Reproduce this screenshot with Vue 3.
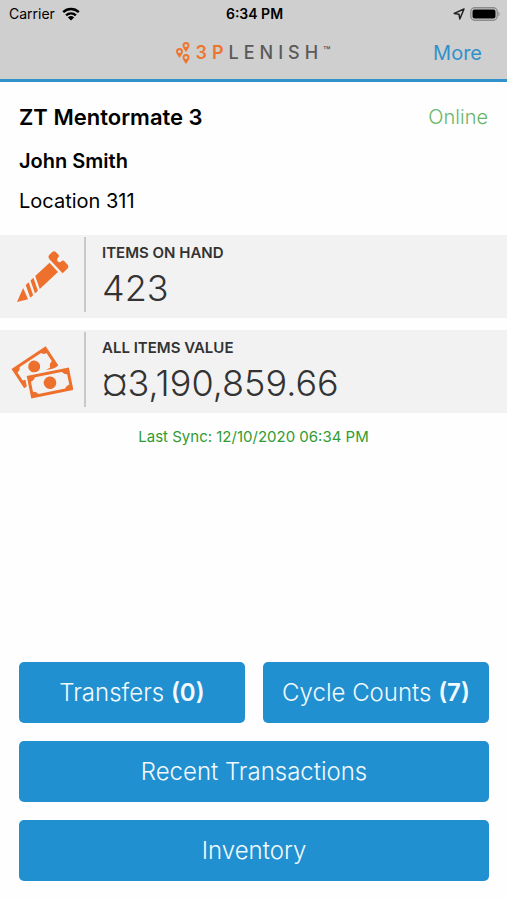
<script setup>
const stats = [
  { id: 'items', label: 'ITEMS ON HAND', value: '423' },
  { id: 'value', label: 'ALL ITEMS VALUE', value: '¤3,190,859.66' },
]

const actions = [
  { label: 'Transfers', count: 0 },
  { label: 'Cycle Counts', count: 7 },
  { label: 'Recent Transactions', wide: true },
  { label: 'Inventory', wide: true },
]

const pins = ['translate(6.500 0)', 'translate(0 6)', 'translate(6.500 12)']
</script>

<template>
  <div class="screen">
    <header class="top">
      <div class="status">
        <div class="carrier">
          <span>Carrier</span>
          <svg class="wifi" viewBox="0 0 18 14" aria-hidden="true">
            <path d="M1.200 5.100a11.300 11.300 0 0 1 15.600 0" />
            <path d="M4.100 8.300a7.100 7.100 0 0 1 9.800 0" />
            <path class="solid" d="M9 13.600 5.900 10.500a4.600 4.600 0 0 1 6.200 0z" />
          </svg>
        </div>
        <span class="time">6:34 PM</span>
        <div class="power">
          <svg class="locate" viewBox="0 0 12 12" aria-hidden="true">
            <path d="M11 1 1.200 5.400 6 6.200 6.800 11z" />
          </svg>
          <svg class="battery" viewBox="0 0 30 14" aria-hidden="true">
            <rect class="shell" x=".8" y=".8" width="26.400" height="12.400" rx="4" />
            <rect x="2.500" y="2.500" width="23" height="9" rx="2" />
            <path class="tip" d="M28.400 4.600c1.600.8 1.600 4 0 4.800z" />
          </svg>
        </div>
      </div>
      <div class="nav">
        <h1 class="brand">
          <svg class="pins" viewBox="0 0 14 22" aria-hidden="true">
            <path
              v-for="pin in pins"
              :key="pin"
              :transform="pin"
              d="M3.500 0A3.500 3.500 0 0 1 7 3.500C7 5.800 4.800 7.200 4 9.600H3C2.200 7.200 0 5.800 0 3.500A3.500 3.500 0 0 1 3.500 0zM3.500 1.900a1.600 1.600 0 1 0 0 3.200 1.600 1.600 0 0 0 0-3.200z"
            />
          </svg>
          <span class="wordmark"><span class="accent">3P</span>LENISH</span><span class="tm">™</span>
        </h1>
        <a class="more" href="#more">More</a>
      </div>
    </header>

    <main class="body">
      <section class="profile">
        <div class="profile-head">
          <h2 class="account">ZT Mentormate 3</h2>
          <span class="online">Online</span>
        </div>
        <p class="person">John Smith</p>
        <p class="place">Location 311</p>
      </section>

      <section class="stats">
        <article v-for="stat in stats" :key="stat.id" class="stat">
          <div class="stat-icon">
            <svg v-if="stat.id === 'items'" viewBox="0 0 64 64" aria-hidden="true">
              <g transform="translate(8 59) rotate(-43)">
                <path d="M0 0 14-6 10 5.500z" />
                <path d="M12.500 6 18-6.500H22L16.500 6z" />
                <path d="M19 6 24.500-6.500H28.500L23 6z" />
                <path d="M25.500 6 31-6.500H50.500V6z" />
                <path d="M53-8.500q0-4 3-4h3.500q3 0 3 3v3q0 2-2 2-3 .5-3 2.500T59.500.500q3 0 3 2v4q0 3.500-3 3.500h-6.500z" />
              </g>
            </svg>
            <svg v-else viewBox="0 0 64 64" aria-hidden="true">
              <g transform="translate(2.500 31) rotate(-33.500)">
                <rect class="note" x="1.500" y="1.500" width="38" height="20" />
                <circle cx="20.300" cy="10.500" r="6" />
                <path d="M1 1h7q0 5-7 5.500zM40 1h-7q0 5 7 5.500zM1 21h7q0-5-7-5.500zM40 21h-7q0-5 7-5.500z" />
              </g>
              <g transform="translate(17.700 38) rotate(-11.500)">
                <rect class="gap" x="-2" y="-2" width="46" height="27" />
                <rect class="note" x="1.500" y="1.500" width="40" height="20" />
                <circle cx="21.500" cy="11.300" r="6.300" />
                <path d="M1 1h7q0 5-7 5.500zM42 1h-7q0 5 7 5.500zM1 22h7q0-5-7-5.500zM42 22h-7q0-5 7-5.500z" />
              </g>
            </svg>
          </div>
          <div class="stat-text">
            <h3 class="stat-label">{{ stat.label }}</h3>
            <p class="stat-value">{{ stat.value }}</p>
          </div>
        </article>
      </section>

      <p class="sync">Last Sync: 12/10/2020 06:34 PM</p>

      <nav class="actions">
        <button
          v-for="action in actions"
          :key="action.label"
          type="button"
          class="action"
          :class="{ wide: action.wide }"
        >
          {{ action.label }}
          <strong v-if="action.count !== undefined">({{ action.count }})</strong>
        </button>
      </nav>
    </main>
  </div>
</template>

<style>
body {
  background: #fefefe;
}
</style>

<style scoped>
.screen {
  display: flex;
  flex-direction: column;
  min-height: 100vh;
  font-family: Inter, "Liberation Sans", sans-serif;
  color: #000;
}

h1, h2, h3, p {
  margin: 0;
}

.top {
  background: #cfcfcf;
  border-bottom: 3px solid #3192cb;
}

.status,
.nav {
  display: grid;
  grid-template-columns: 1fr auto 1fr;
  align-items: center;
}

.status {
  height: 27px;
  padding: 0 7px 0 9px;
  font-size: 14px;
}

.carrier,
.power {
  display: flex;
  align-items: center;
  gap: 7px;
}

.power {
  justify-content: flex-end;
  gap: 5px;
}

.wifi {
  width: 18px;
  height: 14px;
  fill: none;
  stroke: #000;
  stroke-width: 2.4;
}

.wifi .solid {
  fill: #000;
  stroke: none;
}

.time {
  font-weight: 600;
}

.locate {
  width: 12px;
  height: 12px;
  fill: none;
  stroke: #222;
  stroke-width: 1.5;
  stroke-linejoin: round;
}

.battery {
  width: 30px;
  height: 14px;
}

.battery .shell {
  fill: none;
  stroke: #8b8b8b;
  stroke-width: 1.4;
}

.battery .tip {
  fill: #8b8b8b;
}

.nav {
  height: 52px;
  padding: 0 25px;
}

.brand {
  grid-column: 2;
  display: flex;
  align-items: center;
  font-size: 18px;
  font-weight: 500;
  line-height: 22px;
  color: #5a5a5a;
}

.pins {
  width: 14px;
  height: 22px;
  margin-right: 5px;
  fill: #ed762f;
}

.wordmark {
  letter-spacing: 5px;
}

.accent {
  font-weight: 600;
  color: #ed762f;
}

.tm {
  align-self: flex-start;
  font-size: 12px;
  line-height: 18px;
}

.more {
  justify-self: end;
  font-size: 20px;
  color: #3192cb;
  text-decoration: none;
}

.body {
  flex: 1;
  display: flex;
  flex-direction: column;
}

.profile {
  display: flex;
  flex-direction: column;
  padding: 20px 19px;
}

.profile-head {
  display: flex;
  align-items: center;
  justify-content: space-between;
  line-height: 30px;
}

.account {
  font-size: 22px;
  font-weight: 600;
}

.online {
  font-size: 20px;
  font-weight: 300;
  color: #68b568;
}

.person {
  margin-top: 16px;
  font-size: 20px;
  font-weight: 600;
  line-height: 26px;
}

.place {
  margin-top: 13px;
  font-size: 20px;
  line-height: 28px;
}

.stats {
  display: flex;
  flex-direction: column;
  gap: 12px;
}

.stat {
  display: flex;
  padding: 2px 0 6px;
  background: #f2f2f2;
}

.stat-icon {
  display: flex;
  align-items: center;
  padding: 0 11px 0 9px;
  border-right: 2px solid #c8c8c8;
}

.stat-icon svg {
  width: 64px;
  height: 64px;
  fill: #ed702d;
}

.stat-icon .note {
  fill: none;
  stroke: #ed702d;
  stroke-width: 3;
}

.stat-icon .gap {
  fill: #f2f2f2;
}

.stat-text {
  padding: 6px 16px 0;
}

.stat-label {
  font-size: 15px;
  font-weight: 600;
  line-height: 20px;
  color: #333;
}

.stat-value {
  margin-top: 2px;
  font-size: 36px;
  font-weight: 300;
  line-height: 47px;
  color: #333;
}

.sync {
  margin-top: 14px;
  font-size: 15px;
  line-height: 20px;
  text-align: center;
  color: #329b32;
}

.actions {
  display: grid;
  grid-template-columns: 1fr 1fr;
  gap: 18px;
  margin-top: auto;
  padding: 18px 18px 19px 19px;
}

.action {
  min-height: 61px;
  padding: 0 8px;
  border: 0;
  border-radius: 5px;
  background: #2190d0;
  color: #f2faff;
  font-family: inherit;
  font-size: 24px;
  font-weight: 300;
}

.action strong {
  font-weight: 600;
}

.wide {
  grid-column: 1 / -1;
}
</style>
